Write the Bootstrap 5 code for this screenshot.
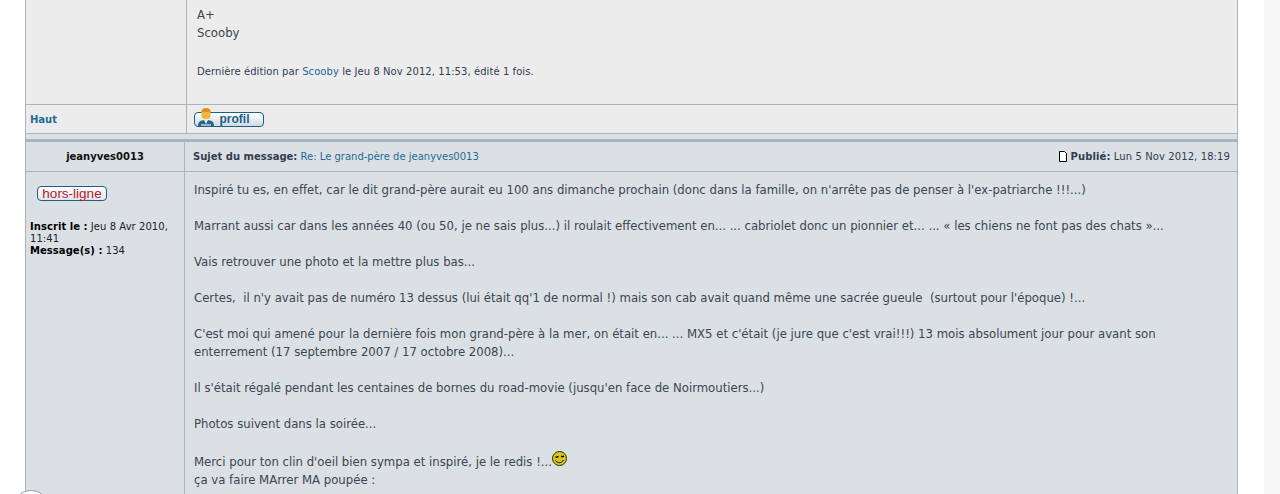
<!DOCTYPE html>
<html lang="fr">
<head>
  <meta charset="UTF-8">
  <title>Le grand-père de jeanyves0013</title>
  <link href="https://cdn.jsdelivr.net/npm/bootstrap@5.3.0/dist/css/bootstrap.min.css" rel="stylesheet">
  <style>
    html, body { height: 494px; overflow: hidden; background: #fff; }
    body { font-family: "DejaVu Sans", Verdana, sans-serif; font-size: 10px; color: #323d4f; }
    a { color: #1f6a94; text-decoration: none; }
    .page-gutter { width: 16px; background: #f7f7f7; }
    .forum { width: 1213px; margin-left: 25px; border-left: 1px solid #a9b4bd; border-right: 1px solid #a9b4bd; }
    .side-col { width: 161px; flex: none; border-right: 1px solid #a9b4bd; }
    .row-light { background: #ececec; }
    .row-blue { background: #dbe0e5; }
    .post-top { height: 105px; border-bottom: 1px solid #a9b4bd; }
    .post-top-body { padding: 6px 0 0 10px; }
    .msg-text { font-family: "DejaVu Sans Condensed", "DejaVu Sans", sans-serif; font-size: 13px; line-height: 18px; color: #3c4650; }
    .edit-note { margin-top: 23px; font-size: 10px; letter-spacing: .07px; line-height: 14px; }
    .post-foot { height: 29px; border-bottom: 1px solid #a9b4bd; }
    .haut-link { font-weight: 700; font-size: 10px; padding-left: 4px; }
    .profil-btn { position: relative; width: 70px; height: 15px; margin-left: 7px; border: 1px solid #1f5f85; border-radius: 4px; background: linear-gradient(#fff, #cfdae4); font-family: "Liberation Sans", sans-serif; font-size: 12px; font-weight: 700; line-height: 13px; text-align: center; color: #1f5f85; padding-left: 11px; }
    .profil-icon { position: absolute; left: 2px; top: -6px; }
    .sep-bar { height: 8px; background: #dbe0e5; border-bottom: 3px solid #a9b4bd; }
    .post-head { height: 30px; border-bottom: 1px solid #a9b4bd; }
    .head-name { width: 158px; flex: none; font-weight: 700; color: #111; text-align: center; }
    .head-main { padding: 0 7px 0 8px; border-left: 1px solid #a9b4bd; }
    .head-date { letter-spacing: .1px; }
    .status-btn { width: 70px; height: 15px; margin: 0 0 0 11px; border: 1px solid #1f5f85; border-radius: 4px; background: linear-gradient(#fff, #e3e6ea); font-family: "Liberation Sans", sans-serif; font-size: 13.5px; line-height: 13px; text-align: center; color: #b5202a; }
    .user-info { margin-top: 20px; padding-left: 4px; line-height: 12px; letter-spacing: .05px; color: #222; }
    .user-info b { color: #000; }
    .post-main { height: 330px; }
    .post-side { width: 159px; flex: none; padding-top: 14px; border-right: 1px solid #a9b4bd; }
    .post-body { flex: 1; min-width: 0; padding: 9px 6px 0 9px; }
    .post-body p { margin: 0 0 18px; }
    .smiley { vertical-align: 0; }
    .corner-arc { position: absolute; left: 19px; top: 490px; width: 24px; height: 14px; border: 1px solid #9aa4ad; border-radius: 50%; background: #fff; }
  </style>
</head>
<body class="position-relative">

<div class="d-flex justify-content-between">
  <div class="forum">
    <!-- fin du message précédent -->
    <div class="d-flex row-light post-top">
      <div class="side-col"></div>
      <div class="post-top-body">
        <div class="msg-text">A+<br>Scooby</div>
        <div class="edit-note">Dernière édition par <a href="#">Scooby</a> le Jeu 8 Nov 2012, 11:53, édité 1 fois.</div>
      </div>
    </div>
    <div class="d-flex row-light post-foot">
      <div class="side-col d-flex align-items-center"><a href="#" class="haut-link">Haut</a></div>
      <div class="d-flex align-items-center">
        <div class="profil-btn">
          <svg class="profil-icon" width="18" height="20" viewBox="0 0 18 20">
            <path d="M1 19c0-4 2-6 8-6s8 2 8 6z" fill="#2f6487"/>
            <path d="M7 13h4l-2 4z" fill="#e8eef2"/>
            <path d="M4 19h10v-2H4z" fill="#9fb8c9"/>
            <rect x="4.5" y="1" width="9" height="11" rx="3.5" fill="#f2b63c"/>
            <path d="M4.5 5c0-5 9-5 9 0z" fill="#d9921c"/>
          </svg>
          profil
        </div>
      </div>
    </div>
    <div class="sep-bar"></div>

    <!-- message de jeanyves0013 -->
    <div class="d-flex align-items-center row-blue post-head">
      <div class="head-name">jeanyves0013</div>
      <div class="head-main flex-grow-1 d-flex justify-content-between align-items-center align-self-stretch">
        <div><b>Sujet du message:</b> <a href="#">Re: Le grand-père de jeanyves0013</a></div>
        <div class="d-flex align-items-center gap-1 head-date">
          <svg width="8" height="11" viewBox="0 0 8 11"><path d="M.5.5h5l2 2v8h-7z" fill="#fff" stroke="#000"/></svg>
          <span><b>Publié:</b> Lun 5 Nov 2012, 18:19</span>
        </div>
      </div>
    </div>
    <div class="d-flex row-blue post-main">
      <div class="post-side">
        <div class="status-btn">hors-ligne</div>
        <div class="user-info"><b>Inscrit le :</b> Jeu 8 Avr 2010, 11:41<br><b>Message(s) :</b> 134</div>
      </div>
      <div class="post-body msg-text">
        <p>Inspiré tu es, en effet, car le dit grand-père aurait eu 100 ans dimanche prochain (donc dans la famille, on n'arrête pas de penser à l'ex-patriarche !!!...)</p>
        <p>Marrant aussi car dans les années 40 (ou 50, je ne sais plus...) il roulait effectivement en... ... cabriolet donc un pionnier et... ... « les chiens ne font pas des chats »...</p>
        <p>Vais retrouver une photo et la mettre plus bas...</p>
        <p>Certes,&nbsp; il n'y avait pas de numéro 13 dessus (lui était qq'1 de normal !) mais son cab avait quand même une sacrée gueule&nbsp; (surtout pour l'époque) !...</p>
        <p>C'est moi qui amené pour la dernière fois mon grand-père à la mer, on était en... ... MX5 et c'était (je jure que c'est vrai!!!) 13 mois absolument jour pour avant son enterrement (17 septembre 2007 / 17 octobre 2008)...</p>
        <p>Il s'était régalé pendant les centaines de bornes du road-movie (jusqu'en face de Noirmoutiers...)</p>
        <p>Photos suivent dans la soirée...</p>
        <div>Merci pour ton clin d'oeil bien sympa et inspiré, je le redis !...<svg class="smiley" width="15" height="15" viewBox="0 0 15 15"><circle cx="7.5" cy="7.5" r="7" fill="#d8c81c" stroke="#2a2a00"/><path d="M3.5 6.5l3-1M9 5.5h3" stroke="#000" stroke-width="1.4" fill="none"/><path d="M3.5 9.5c2 3 6 3 8-.5" stroke="#000" fill="none"/></svg></div>
        <div>ça va faire MArrer MA poupée :</div>
      </div>
    </div>
  </div>
  <div class="page-gutter"></div>
</div>
<div class="corner-arc"></div>

<script src="https://cdn.jsdelivr.net/npm/bootstrap@5.3.0/dist/js/bootstrap.bundle.min.js"></script>
</body>
</html>
